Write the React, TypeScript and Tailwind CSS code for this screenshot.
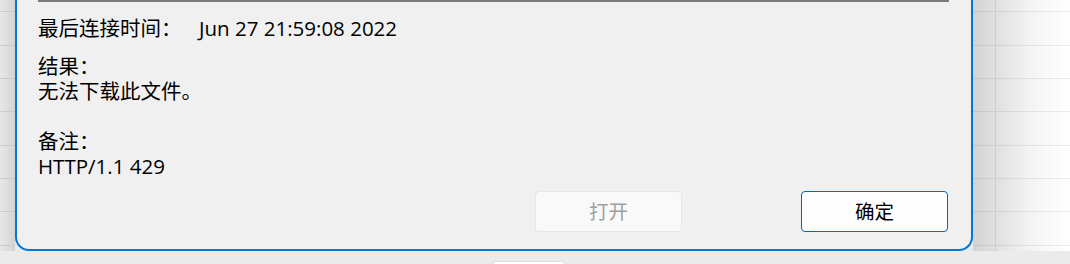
import React from "react";

const rowClasses = [
  "h-[12px]",
  "h-[34px]",
  "h-[33px]",
  "h-[33px]",
  "h-[34px]",
  "h-[33px]",
  "h-[33px]",
  "h-[34px]",
];

function GridRows({ line }: { line: string }) {
  return (
    <div className="flex flex-col">
      {rowClasses.map((h, i) => (
        <div key={i} className={`${h} border-b ${line}`} />
      ))}
    </div>
  );
}

export default function App() {
  return (
    <div className="w-[1070px] h-[264px] overflow-hidden flex flex-col bg-[#ebebeb] font-['Open_Sans','Noto_Sans_CJK_SC',sans-serif] text-[20.5px] text-black">
      <div className="flex h-[251px]">
        <div className="w-[15px] bg-gradient-to-r from-[#e7e7e7] to-[#d4d4d4]">
          <GridRows line="border-[#cacaca]" />
        </div>
        <div className="w-[958px] h-full flex flex-col bg-[#f0f0f0] border-x-2 border-b-2 border-[#0078d4] rounded-b-[14px] pl-[21px] pr-[22px]">
          <div className="h-[2px] bg-[#7a7a7a]" />
          <div className="mt-[14px] h-[25px] leading-[25px] flex">
            <span className="w-[161px] shrink-0">最后连接时间：</span>
            <span>Jun 27 21:59:08 2022</span>
          </div>
          <div className="mt-[13px] flex flex-col leading-[25px]">
            <div className="h-[25px]">结果：</div>
            <div className="h-[25px]">无法下载此文件。</div>
            <div className="h-[25px]" />
            <div className="h-[25px]">备注：</div>
            <div className="h-[25px]">HTTP/1.1 429</div>
          </div>
          <div className="mt-[12px] flex justify-end gap-[119px] pr-px">
            <button className="w-[147px] h-[41px] rounded-[4px] border border-[#e6e6e6] bg-[#f9f9f9] text-[#a0a0a0] text-[19.5px]">
              打开
            </button>
            <button className="w-[147px] h-[41px] rounded-[4px] border border-[#0067c0] bg-[#fdfdfd] text-black text-[19.5px]">
              确定
            </button>
          </div>
        </div>
        <div className="flex-1 flex bg-gradient-to-r from-[#d3d3d3] via-[#f4f4f4] via-60% to-white">
          <div className="w-[23px] border-r border-[#00000014]">
            <GridRows line="border-[#00000012]" />
          </div>
          <div className="flex-1">
            <GridRows line="border-[#00000012]" />
          </div>
        </div>
      </div>
      <div className="h-[13px] bg-[#ebebeb] flex flex-col">
        <div className="ml-[493px] mt-[10px] w-[72px] h-[3px] bg-white rounded-t-[3px] border-t border-x border-[#e0e0e0]" />
      </div>
    </div>
  );
}
